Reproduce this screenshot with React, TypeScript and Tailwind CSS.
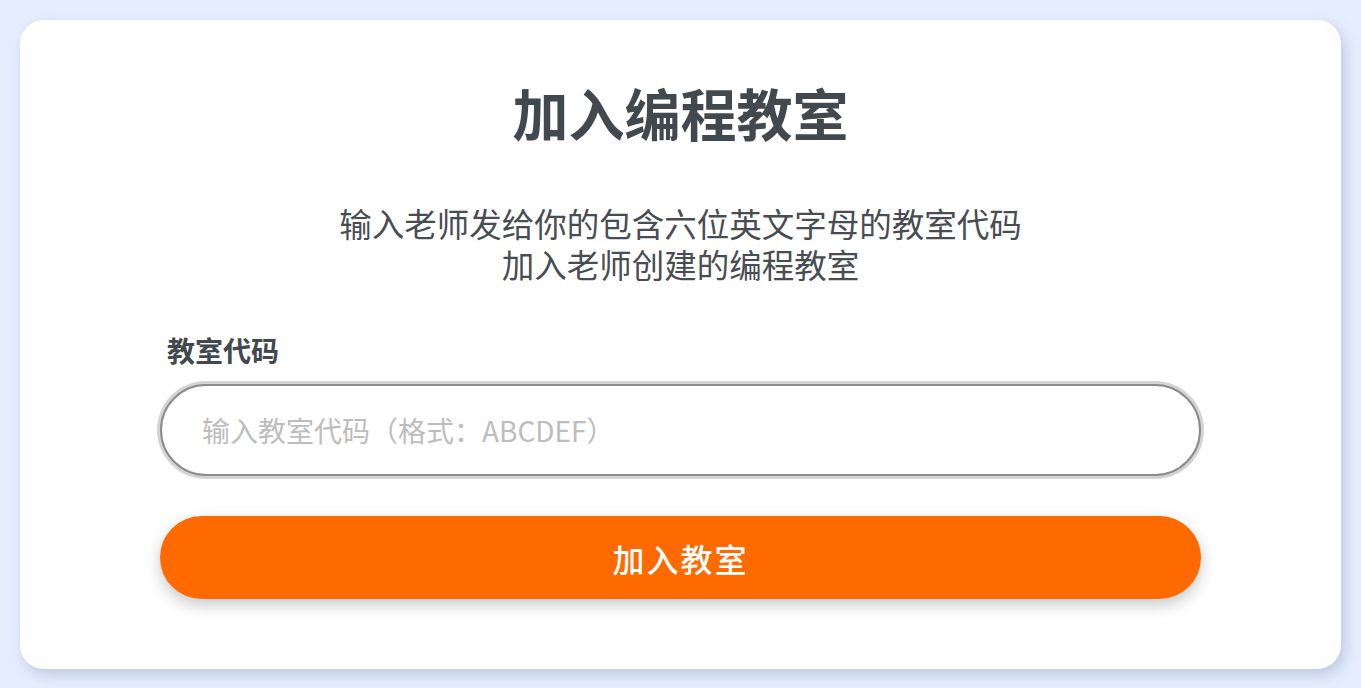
import React from 'react';

const font = { fontFamily: '"Noto Sans CJK SC", "Noto Sans", sans-serif' };

export default function App() {
  return (
    <div
      className="min-h-[688px] w-full bg-[#e5eefe] px-[20px] pt-[20px] pb-[21px]"
      style={font}
    >
      <div className="rounded-[24px] bg-white px-[140px] pt-[58px] pb-[70px] shadow-[4px_6px_14px_rgba(120,135,170,0.35)]">
        {/* Header */}
        <h1 className="text-center text-[56px] font-semibold leading-[68px] text-[#41494f]">
          加入编程教室
        </h1>
        <div className="mt-[56px] text-center text-[32.5px] leading-[41px] text-[#474d53]">
          <p>输入老师发给你的包含六位英文字母的教室代码</p>
          <p>加入老师创建的编程教室</p>
        </div>

        {/* Form */}
        <label className="mt-[48px] block pl-[7px] text-[28px] font-semibold leading-[36px] text-[#41494f]">
          教室代码
        </label>
        <div className="mt-[16px]">
          <input
            type="text"
            placeholder="输入教室代码（格式：ABCDEF）"
            className="block h-[92px] w-full rounded-full border-2 border-[#8c8c8c] bg-white px-[40px] text-[28px] text-[#41494f] shadow-[0_0_0_3px_#d4d4d4] outline-none placeholder:text-[#bdbdbd]"
            style={font}
          />
        </div>
        <button
          className="mt-[40px] flex h-[83px] w-full items-center justify-center rounded-full bg-[#ff6a00] text-[32px] font-medium tracking-[2px] text-white shadow-[0_6px_16px_rgba(0,0,0,0.22)]"
          style={font}
        >
          加入教室
        </button>
      </div>
    </div>
  );
}
